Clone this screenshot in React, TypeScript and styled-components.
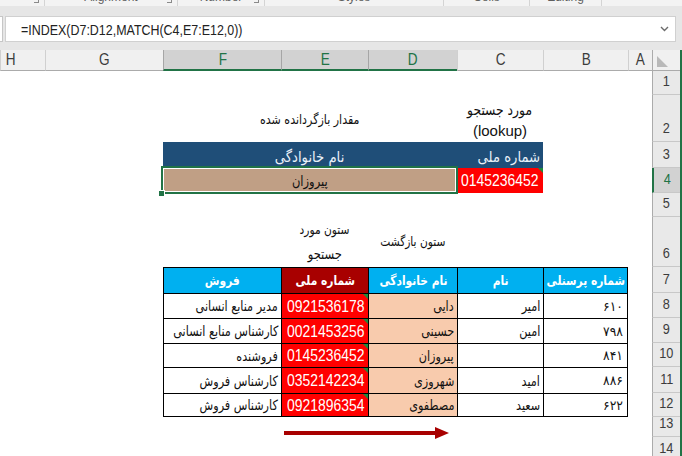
import React from "react";
import styled, { createGlobalStyle, css } from "styled-components";

const SANS = `"Liberation Sans", Arial, sans-serif`;
const PERSIAN = `"DejaVu Sans", "Noto Sans", sans-serif`;

const GREEN = "#217346";
const DARK_RED = "#a80000";

const GlobalStyle = createGlobalStyle`
  *, *::before, *::after { box-sizing: border-box; }
  html, body { margin: 0; padding: 0; background: #ffffff; }
  body { width: 682px; height: 456px; overflow: hidden; }
`;

const Txt = styled.span<{ $o?: "left" | "center" | "right"; $sx?: number; $size?: number }>`
  display: inline-block;
  flex: none;
  white-space: nowrap;
  ${(p) => (p.$size ? `font-size: ${p.$size}px;` : "")}
  transform: scaleX(${(p) => p.$sx ?? 0.82});
  transform-origin: ${(p) => p.$o ?? "center"} center;
`;

/* ---------- window chrome ---------- */

const Window = styled.div`
  position: relative;
  width: 682px;
  height: 456px;
  display: flex;
  flex-direction: column;
  background: #e6e6e6;
  overflow: hidden;
`;

const Ribbon = styled.div`
  flex: none;
  height: 6px;
  display: flex;
  background: #f3f3f3;
  overflow: hidden;
`;

const RibbonGroup = styled.div<{ $w: number }>`
  position: relative;
  flex: none;
  width: ${(p) => p.$w}px;
  display: flex;
  justify-content: center;
  border-right: 1px solid #d4d4d4;
`;

const RibbonLabel = styled.span`
  margin-top: -10px;
  font: 12px ${SANS};
  line-height: 14px;
  color: #5f5f5f;
`;

const Launcher = styled.span`
  position: absolute;
  right: 5px;
  top: 0;
  width: 5px;
  height: 3px;
  border-right: 1px solid #8a8a8a;
  border-bottom: 1px solid #8a8a8a;
`;

const FormulaArea = styled.div`
  flex: none;
  height: 44px;
  display: flex;
  padding: 10px 6px 8px 0;
  background: #e6e6e6;
`;

const NameBoxEdge = styled.div`
  width: 3px;
  margin-right: 2px;
  background: #ffffff;
  border: 1px solid #c6c6c6;
  border-left: none;
`;

const FormulaBox = styled.div`
  flex: 1;
  display: flex;
  align-items: center;
  justify-content: space-between;
  padding: 0 6px 0 15px;
  background: #ffffff;
  border: 1px solid #d0d0d0;
  font: 15px ${SANS};
  color: #222;
`;

/* ---------- sheet grid ---------- */

const Sheet = styled.div`
  position: relative;
  flex: 1;
  min-height: 0;
  display: grid;
  grid-template-columns: 45px 118px 118px 87px 89px 86px 85px 24px 28px;
  grid-template-rows: 21px 24px 47px 26px 25px 24px 50px 26px 25px 25px 24px 26px 24px 20px 25px;
  background: #ffffff;
  border-right: 2px solid ${GREEN};
  overflow: hidden;
`;

type Place = { $c: number; $r: number; $span?: number };

const place = css<Place>`
  grid-column: ${(p) => p.$c} / span ${(p) => p.$span ?? 1};
  grid-row: ${(p) => p.$r};
`;

/* $cut: the column runs on past the window edge, so its letter sits off-centre */
const ColHeader = styled.div<Place & { $sel?: boolean; $cut?: boolean }>`
  ${place};
  display: flex;
  align-items: center;
  justify-content: ${(p) => (p.$cut ? "flex-start" : "center")};
  padding-left: ${(p) => (p.$cut ? 4 : 0)}px;
  font: 16px ${SANS};
  color: ${(p) => (p.$sel ? GREEN : "#3c3c3c")};
  background: ${(p) => (p.$sel ? "#d2d2d2" : "#f0f0f0")};
  border-left: 1px solid ${(p) => (p.$sel ? "#a6a6a6" : "#d0d0d0")};
  border-bottom: ${(p) => (p.$sel ? `2px solid ${GREEN}` : "1px solid #ababab")};
  padding-top: ${(p) => (p.$sel ? 1 : 0)}px;
`;

const Corner = styled.div<Place>`
  ${place};
  position: relative;
  background: #f0f0f0;
  border-left: 1px solid #ababab;
  border-bottom: 1px solid #ababab;
`;

const SelectAll = styled.span`
  position: absolute;
  left: 4px;
  top: 6px;
  width: 0;
  height: 0;
  border-bottom: 11px solid #b9b9b9;
  border-right: 11px solid transparent;
`;

const RowHeader = styled.div<Place & { $sel?: boolean }>`
  ${place};
  display: flex;
  align-items: flex-end;
  justify-content: center;
  padding-bottom: 4px;
  font: 15px ${SANS};
  line-height: 18px;
  color: ${(p) => (p.$sel ? GREEN : "#3c3c3c")};
  background: ${(p) => (p.$sel ? "#d2d2d2" : "#e9e9e9")};
  border-left: ${(p) => (p.$sel ? `2px solid ${GREEN}` : "1px solid #ababab")};
  border-bottom: 1px solid #c8c8c8;
  overflow: hidden;
`;

/* plain captions written on the sheet */
const Caption = styled.div<Place>`
  ${place};
  display: flex;
  flex-direction: column;
  align-items: center;
  justify-content: center;
  direction: rtl;
  font: 13px ${PERSIAN};
  line-height: 24px;
  color: #111;
`;

const LatinLine = styled.span`
  direction: ltr;
  unicode-bidi: isolate;
  font: 15px ${SANS};
`;

/* dark blue band above the result */
const Band = styled.div<Place & { $align: "center" | "right" }>`
  ${place};
  display: flex;
  align-items: center;
  justify-content: ${(p) => (p.$align === "right" ? "flex-start" : "center")};
  direction: rtl;
  padding: 3px 3px 0;
  background: #1f4e78;
  font: 15px ${PERSIAN};
  color: #eaf1f8;
`;

const ResultCell = styled.div<Place>`
  ${place};
  position: relative;
  z-index: 2;
  display: flex;
  align-items: center;
  justify-content: center;
  direction: rtl;
  padding-top: 1px;
  background: #c09f85;
  font: 14px ${PERSIAN};
  color: #111;
  &::after {
    content: "";
    position: absolute;
    left: -2px;
    right: -1px;
    top: -2px;
    bottom: -1px;
    border: 2px solid ${GREEN};
    box-shadow: inset 0 0 0 1px #ffffff;
  }
`;

const FillHandle = styled.span`
  position: absolute;
  z-index: 3;
  left: -5px;
  bottom: -4px;
  width: 7px;
  height: 7px;
  background: ${GREEN};
  border: 1px solid #ffffff;
`;

const errorMark = css`
  &::before {
    content: "";
    position: absolute;
    top: 0;
    right: 0;
    border-top: 5px solid #1e8a3c;
    border-left: 5px solid transparent;
  }
`;

const LookupCell = styled.div<Place>`
  ${place};
  position: relative;
  display: flex;
  align-items: center;
  justify-content: flex-end;
  padding: 1px 4px 0 0;
  background: #ff0000;
  font: 17px ${SANS};
  color: #ffffff;
  ${errorMark};
`;

/* ---------- employee table ---------- */

const TableCell = styled.div<Place & { $edge?: boolean; $last?: boolean }>`
  ${place};
  position: relative;
  display: flex;
  align-items: center;
  justify-content: flex-start;
  direction: rtl;
  padding: 0 3px;
  border-left: 1px solid #000;
  border-top: 1px solid #000;
  border-right: ${(p) => (p.$edge ? "1px solid #000" : "none")};
  border-bottom: ${(p) => (p.$last ? "1px solid #000" : "none")};
  font: 14px ${PERSIAN};
  color: #111;
`;

const HeadCell = styled(TableCell)<{ $bg: string }>`
  justify-content: center;
  background: ${(p) => p.$bg};
  color: #ffffff;
  font-size: 13px;
  font-weight: bold;
`;

const SurnameCell = styled(TableCell)`
  background: #f8cbad;
`;

const IdCell = styled(TableCell)`
  padding-top: 1px;
  background: #ff0000;
  color: #ffffff;
  font: 17px ${SANS};
  ${errorMark};
`;

const DigitCell = styled(TableCell)`
  font-size: 13px;
  padding-right: 4px;
`;

const Arrow = styled.svg`
  position: absolute;
  left: 282px;
  top: 376px;
`;

const ribbonGroups = [
  { w: 45, label: "", launcher: true },
  { w: 133, label: "Alignment", launcher: true },
  { w: 87, label: "Number", launcher: true },
  { w: 179, label: "Styles", launcher: false },
  { w: 86, label: "Cells", launcher: false },
  { w: 72, label: "Editing", launcher: false },
];

const columns = [
  { c: 1, name: "H", cut: true },
  { c: 2, name: "G" },
  { c: 3, name: "F", sel: true },
  { c: 4, name: "E", sel: true },
  { c: 5, name: "D", sel: true },
  { c: 6, name: "C" },
  { c: 7, name: "B" },
  { c: 8, name: "A" },
];

const employees = [
  { no: "۶۱۰", name: "امیر", surname: "دایی", id: "0921536178", job: "مدیر منابع انسانی" },
  { no: "۷۹۸", name: "امین", surname: "حسینی", id: "0021453256", job: "کارشناس منابع انسانی" },
  { no: "۸۴۱", name: "", surname: "پیروزان", id: "0145236452", job: "فروشنده" },
  { no: "۸۸۶", name: "امید", surname: "شهروزی", id: "0352142234", job: "کارشناس فروش" },
  { no: "۶۲۲", name: "سعید", surname: "مصطفوی", id: "0921896354", job: "کارشناس فروش" },
];

export default function App() {
  return (
    <>
      <GlobalStyle />
      <Window>
        <Ribbon>
          {ribbonGroups.map((g, i) => (
            <RibbonGroup key={i} $w={g.w}>
              {g.label && <RibbonLabel>{g.label}</RibbonLabel>}
              {g.launcher && <Launcher />}
            </RibbonGroup>
          ))}
        </Ribbon>

        <FormulaArea>
          <NameBoxEdge />
          <FormulaBox>
            <Txt $o="left" $sx={0.83}>=INDEX(D7:D12,MATCH(C4,E7:E12,0))</Txt>
            <svg width="9" height="6" viewBox="0 0 9 6">
              <polyline points="1,1 4.5,4.5 8,1" fill="none" stroke="#6b6b6b" strokeWidth="1.4" />
            </svg>
          </FormulaBox>
        </FormulaArea>

        <Sheet>
          {columns.map((col) => (
            <ColHeader key={col.name} $c={col.c} $r={1} $sel={col.sel} $cut={col.cut}>
              <Txt $sx={0.85}>{col.name}</Txt>
            </ColHeader>
          ))}
          <Corner $c={9} $r={1}>
            <SelectAll />
          </Corner>

          {Array.from({ length: 14 }, (_, i) => (
            <RowHeader key={i} $c={9} $r={i + 2} $sel={i + 1 === 4}>
              <Txt $sx={0.85}>{i + 1}</Txt>
            </RowHeader>
          ))}

          {/* row 2 */}
          <Caption $c={3} $span={3} $r={3}>
            <Txt $size={13.5}>مقدار بازگردانده شده</Txt>
          </Caption>
          <Caption $c={6} $r={3}>
            <Txt $size={15}>مورد جستجو</Txt>
            <LatinLine>(lookup)</LatinLine>
          </Caption>

          {/* rows 3-4: lookup block */}
          <Band $c={3} $span={3} $r={4} $align="center">
            <Txt $sx={0.88}>نام خانوادگی</Txt>
          </Band>
          <Band $c={6} $r={4} $align="right">
            <Txt $o="right" $sx={0.88}>شماره ملی</Txt>
          </Band>
          <ResultCell $c={3} $span={3} $r={5}>
            <Txt>پیروزان</Txt>
            <FillHandle />
          </ResultCell>
          <LookupCell $c={6} $r={5}>
            <Txt $o="right">0145236452</Txt>
          </LookupCell>

          {/* row 6 */}
          <Caption $c={4} $r={7}>
            <Txt>ستون مورد</Txt>
            <Txt $size={14}>جستجو</Txt>
          </Caption>
          <Caption $c={5} $r={7}>
            <Txt>ستون بازگشت</Txt>
          </Caption>

          {/* row 7: table head */}
          <HeadCell $c={3} $r={8} $bg="#00b0f0"><Txt>فروش</Txt></HeadCell>
          <HeadCell $c={4} $r={8} $bg={DARK_RED}><Txt>شماره ملی</Txt></HeadCell>
          <HeadCell $c={5} $r={8} $bg="#00b0f0"><Txt>نام خانوادگی</Txt></HeadCell>
          <HeadCell $c={6} $r={8} $bg="#00b0f0"><Txt>نام</Txt></HeadCell>
          <HeadCell $c={7} $r={8} $bg="#00b0f0" $edge><Txt>شماره پرسنلی</Txt></HeadCell>

          {/* rows 8-12: employees */}
          {employees.map((e, i) => {
            const r = 9 + i;
            const last = i === employees.length - 1;
            return (
              <React.Fragment key={e.id}>
                <TableCell $c={3} $r={r} $last={last}><Txt $o="right" $sx={0.8}>{e.job}</Txt></TableCell>
                <IdCell $c={4} $r={r} $last={last}><Txt $o="right">{e.id}</Txt></IdCell>
                <SurnameCell $c={5} $r={r} $last={last}><Txt $o="right" $sx={0.8}>{e.surname}</Txt></SurnameCell>
                <TableCell $c={6} $r={r} $last={last}><Txt $o="right" $sx={0.8}>{e.name}</Txt></TableCell>
                <DigitCell $c={7} $r={r} $last={last} $edge><Txt $o="right" $sx={0.95}>{e.no}</Txt></DigitCell>
              </React.Fragment>
            );
          })}

          <Arrow width="170" height="14" viewBox="0 0 170 14">
            <rect x="2" y="5" width="154" height="4" fill={DARK_RED} />
            <polygon points="153,1 167,7 153,13" fill={DARK_RED} />
          </Arrow>
        </Sheet>
      </Window>
    </>
  );
}
